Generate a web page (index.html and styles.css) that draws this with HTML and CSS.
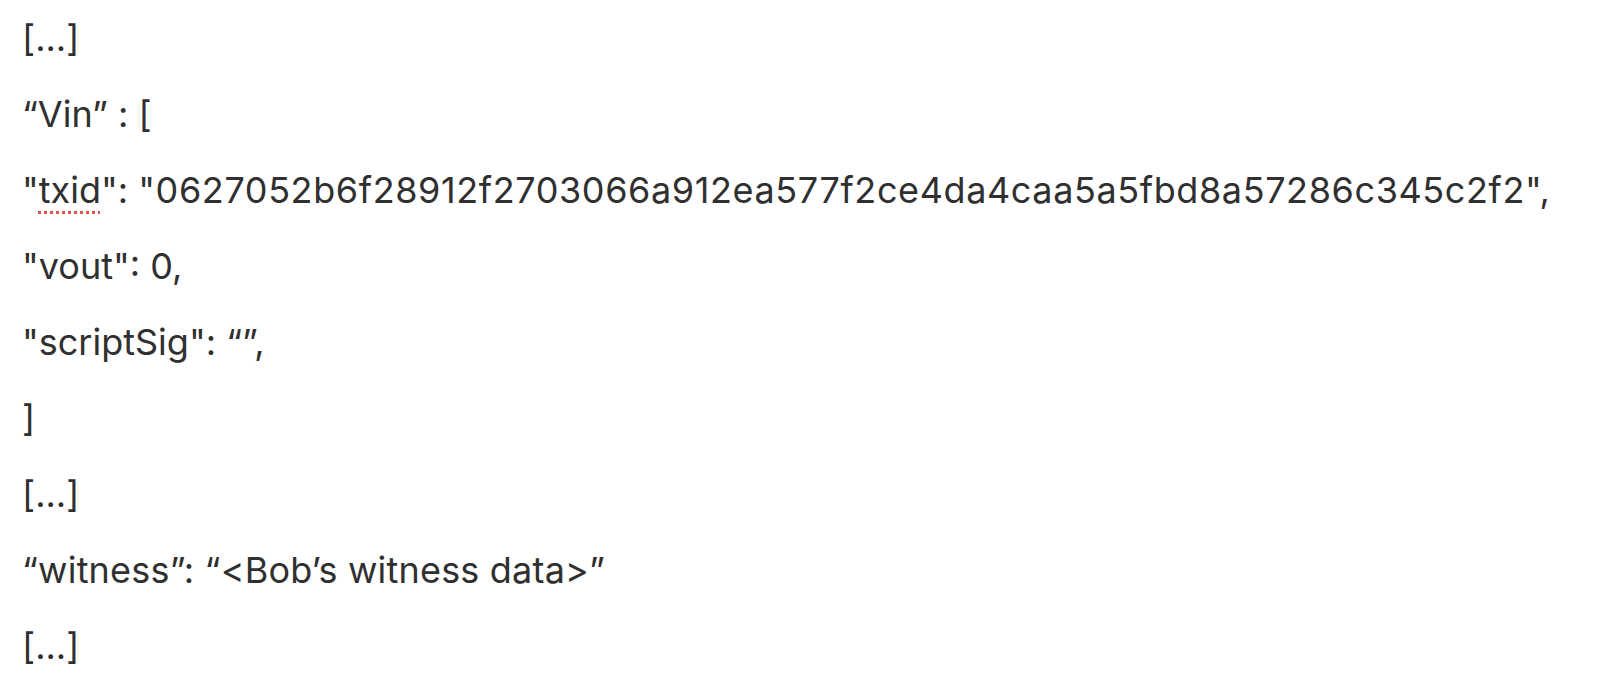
FILE: index.html
```html
<!DOCTYPE html>
<html lang="en">
<head>
<meta charset="utf-8">
<title>Transaction snippet</title>
<link rel="stylesheet" href="styles.css">
</head>
<body>
<main class="doc">
  <p class="line">[...]</p>
  <p class="line">“Vin” : [</p>
  <p class="line">"<span class="spell">txid</span>": <span class="hash">"0627052b6f28912f2703066a912ea577f2ce4da4caa5a5fbd8a57286c345c2f2",</span></p>
  <p class="line">"vout": 0,</p>
  <p class="line">"scriptSig": “”,</p>
  <p class="line">]</p>
  <p class="line">[...]</p>
  <p class="line wide">“witness”: “&lt;Bob’s witness data&gt;”</p>
  <p class="line">[...]</p>
</main>
</body>
</html>
```

FILE: styles.css
```css
html, body {
  margin: 0;
  padding: 0;
  background: #ffffff;
}

.doc {
  padding: 0 0 0 22px;
  font-family: "Inter", "Liberation Sans", sans-serif;
  font-size: 36px;
  letter-spacing: 0;
  color: #303030;
}

.line {
  margin: 0;
  line-height: 76px;
  white-space: nowrap;
}

.wide {
  letter-spacing: 0.2px;
}

.hash {
  letter-spacing: 0.6px;
}

.spell {
  text-decoration: underline dotted #e5534b;
  text-decoration-thickness: 3px;
  text-underline-offset: 8px;
}
```
